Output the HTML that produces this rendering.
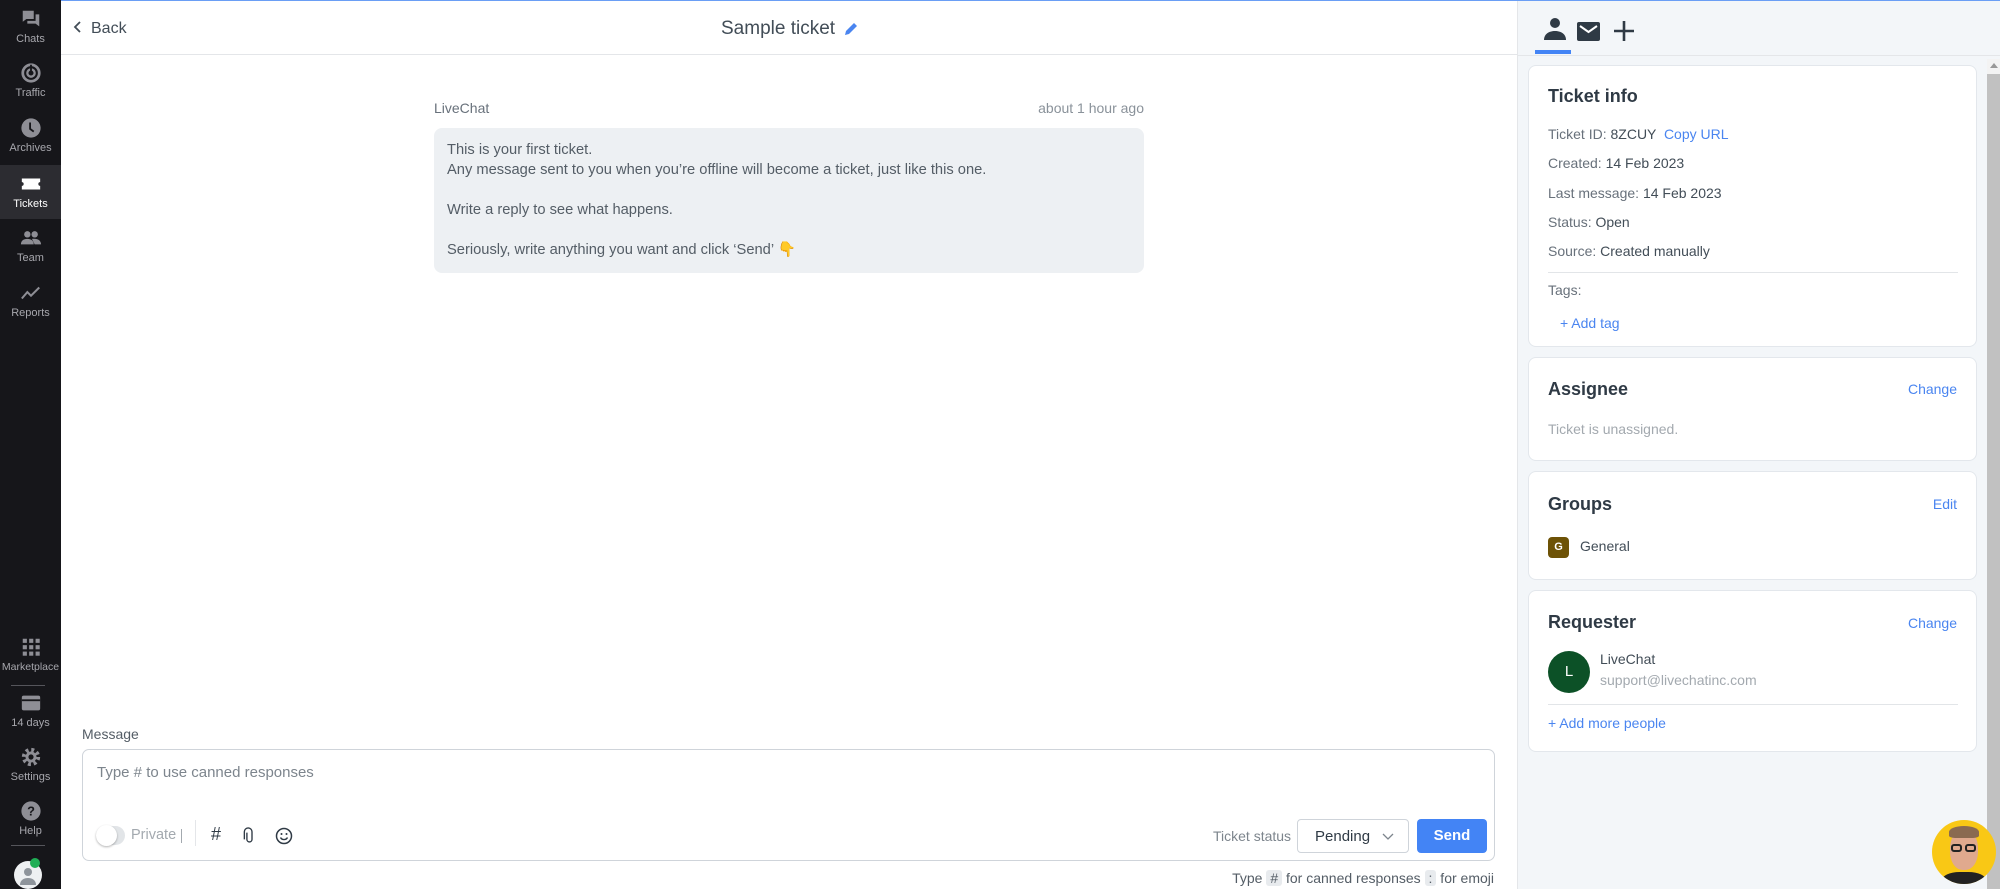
<!DOCTYPE html>
<html><head><meta charset="utf-8">
<style>
*{box-sizing:border-box;margin:0;padding:0}
body{width:2000px;height:889px;overflow:hidden;font-family:"Liberation Sans",sans-serif;background:#fff;position:relative;color:#424d57}
.abs{position:absolute}
#side{left:0;top:0;width:61px;height:889px;background:#16161a}
.si{position:absolute;left:0;width:61px;text-align:center;color:#a7a7ad;font-size:11px}
.si svg{display:block;margin:0 auto 3px}
#topline{left:61px;top:0;width:1939px;height:1px;background:#6a9ef5}
#hdr{left:61px;top:1px;width:1456px;height:54px;border-bottom:1px solid #e4e6e9}
#right{left:1517px;top:1px;width:483px;height:888px;background:#f3f6f9;border-left:1px solid #e4e6e9}
.card{position:absolute;left:10px;width:449px;background:#fff;border:1px solid #e3e7ec;border-radius:8px}
.ct{position:absolute;left:19px;font-size:18px;font-weight:bold;color:#2f3a45}
.row{position:absolute;left:19px;font-size:14px;color:#68717b}
.row b{font-weight:normal;color:#424d57}
.lnk{color:#4a85f0}
.rl{position:absolute;right:19px;font-size:14px;color:#4a85f0}
.txt{font-size:14.7px;line-height:20px}
</style></head><body>
<div id="side" class="abs">
 <div class="si" style="top:8px"><svg width="22" height="22" viewBox="0 0 24 24"><path fill="#8e8e95" d="M3 3h12v9H7l-4 3zM17 7h4v13l-4-3H8v-3h9z"/></svg>Chats</div>
 <div class="si" style="top:62px"><svg width="22" height="22" viewBox="0 0 24 24"><circle cx="12" cy="12" r="9" fill="none" stroke="#8e8e95" stroke-width="3"/><circle cx="12" cy="12" r="4" fill="none" stroke="#8e8e95" stroke-width="2.5"/><path d="M12 3v9" stroke="#16161a" stroke-width="2"/></svg>Traffic</div>
 <div class="si" style="top:117px"><svg width="22" height="22" viewBox="0 0 24 24"><circle cx="12" cy="12" r="10.5" fill="#8e8e95"/><path d="M11 6v7l4 3" stroke="#16161a" stroke-width="2" fill="none"/></svg>Archives</div>
 <div style="position:absolute;left:0;top:165px;width:61px;height:54px;background:#2c2c31"></div>
 <div class="si" style="top:173px;color:#fff"><svg width="22" height="22" viewBox="0 0 24 24"><path fill="#fff" d="M2 6h20v4a2 2 0 0 0 0 4v4H2v-4a2 2 0 0 0 0-4z"/></svg>Tickets</div>
 <div class="si" style="top:227px"><svg width="24" height="22" viewBox="0 0 24 24"><circle cx="8" cy="8" r="3.5" fill="#8e8e95"/><circle cx="16" cy="8" r="3.5" fill="#8e8e95"/><path fill="#8e8e95" d="M1 19c0-4 3-6 7-6s7 2 7 6zM13 13c5-1 10 1 10 6h-7z"/></svg>Team</div>
 <div class="si" style="top:282px"><svg width="22" height="22" viewBox="0 0 24 24"><path d="M2 18l6-7 4 4 9-9" stroke="#8e8e95" stroke-width="2.2" fill="none"/></svg>Reports</div>
 <div class="si" style="top:636px;font-size:10.5px"><svg width="22" height="22" viewBox="0 0 24 24" fill="#8e8e95"><rect x="3" y="3" width="4.5" height="4.5"/><rect x="10" y="3" width="4.5" height="4.5"/><rect x="17" y="3" width="4.5" height="4.5"/><rect x="3" y="10" width="4.5" height="4.5"/><rect x="10" y="10" width="4.5" height="4.5"/><rect x="17" y="10" width="4.5" height="4.5"/><rect x="3" y="17" width="4.5" height="4.5"/><rect x="10" y="17" width="4.5" height="4.5"/><rect x="17" y="17" width="4.5" height="4.5"/></svg>Marketplace</div>
 <div class="abs" style="left:11px;top:685px;width:34px;height:1px;background:#55555b"></div>
 <div class="si" style="top:692px"><svg width="22" height="22" viewBox="0 0 24 24"><rect x="2" y="4" width="20" height="16" rx="2" fill="#8e8e95"/><rect x="2" y="8" width="20" height="2" fill="#16161a"/></svg>14 days</div>
 <div class="si" style="top:746px"><svg width="22" height="22" viewBox="0 0 24 24"><circle cx="12" cy="12" r="7.5" fill="none" stroke="#8e8e95" stroke-width="5" stroke-dasharray="3 2.9"/><circle cx="12" cy="12" r="6" fill="#8e8e95"/><circle cx="12" cy="12" r="2.8" fill="#16161a"/></svg>Settings</div>
 <div class="si" style="top:800px"><svg width="22" height="22" viewBox="0 0 24 24"><circle cx="12" cy="12" r="10.5" fill="#8e8e95"/><text x="12" y="17" text-anchor="middle" font-size="14" font-weight="bold" fill="#16161a" font-family="Liberation Sans">?</text></svg>Help</div>
 <div class="abs" style="left:11px;top:845px;width:34px;height:1px;background:#55555b"></div>
 <div class="abs" style="left:14px;top:861px;width:28px;height:28px;border-radius:50%;background:#eef0f2;overflow:hidden"><svg width="28" height="28" viewBox="0 0 28 28"><circle cx="14" cy="11" r="4" fill="#8e949b"/><path d="M6 24c0-5 4-7 8-7s8 2 8 7z" fill="#8e949b"/></svg></div>
 <div class="abs" style="left:30px;top:858px;width:10px;height:10px;border-radius:50%;background:#1fae55"></div>
</div>
<div id="topline" class="abs"></div>
<div id="hdr" class="abs">
 <div class="abs" style="left:12px;top:19px;font-size:16px;color:#424d57"><svg width="10" height="12" viewBox="0 0 10 12" style="margin-right:8px"><path d="M7 1L2 6l5 5" stroke="#424d57" stroke-width="1.8" fill="none"/></svg>Back</div>
 <div class="abs" style="left:660px;top:17px;font-size:19px;color:#424d57">Sample ticket</div>
 <svg class="abs" style="left:782px;top:20px" width="16" height="16" viewBox="0 0 16 16"><path d="M2 14l1-4 8-8 3 3-8 8z" fill="#4a85f0"/></svg>
</div>
<div class="abs" style="left:434px;top:100px;font-size:14px;color:#68717b">LiveChat</div>
<div class="abs" style="left:1000px;width:144px;text-align:right;top:100px;font-size:14px;color:#8a929a">about 1 hour ago</div>
<div class="abs txt" style="left:434px;top:128px;width:710px;height:145px;background:#edf0f3;border-radius:8px;padding:12px 13px;color:#545d66">
This is your first ticket.<br>Any message sent to you when you’re offline will become a ticket, just like this one.<br><br>Write a reply to see what happens.<br><br>Seriously, write anything you want and click ‘Send’ 👇
</div>
<div class="abs" style="left:82px;top:726px;font-size:14px;color:#545d66">Message</div>
<div class="abs" style="left:82px;top:749px;width:1413px;height:112px;border:1px solid #cfd4da;border-radius:7px">
 <div class="abs" style="left:14px;top:14px;font-size:15px;color:#7d858d">Type # to use canned responses</div>
 <div class="abs" style="left:13px;top:76px;width:29px;height:19px;border-radius:10px;background:#e2e5e8"></div>
 <div class="abs" style="left:13px;top:75px;width:21px;height:21px;border-radius:50%;background:#fff;box-shadow:0 1px 2px rgba(0,0,0,.3)"></div>
 <div class="abs" style="left:48px;top:77px;font-size:14.5px;color:#a3a9af">Private</div>
 <div class="abs" style="left:98px;top:79px;width:1px;height:14px;background:#a3a9af"></div>
 <div class="abs" style="left:112px;top:70px;width:1px;height:26px;background:#e4e6e9"></div>
 <div class="abs" style="left:128px;top:74px;font-size:18px;color:#2f3a45">#</div>
 <svg class="abs" style="left:159px;top:76px" width="14" height="20" viewBox="0 0 14 20"><path d="M4 6v8a3 3 0 0 0 6 0V5a4.5 4.5 0 0 0-9 0v9" stroke="#2f3a45" stroke-width="1.6" fill="none" transform="translate(1.5 1.5) scale(.85)"/></svg>
 <svg class="abs" style="left:192px;top:77px" width="18" height="18" viewBox="0 0 18 18"><circle cx="9" cy="9" r="7.5" fill="none" stroke="#2f3a45" stroke-width="1.5"/><circle cx="6.5" cy="7" r="1" fill="#2f3a45"/><circle cx="11.5" cy="7" r="1" fill="#2f3a45"/><path d="M5.5 10.5a4 4 0 0 0 7 0" stroke="#2f3a45" stroke-width="1.4" fill="none"/></svg>
 <div class="abs" style="left:1130px;top:78px;font-size:14px;color:#7d858d">Ticket status</div>
 <div class="abs" style="left:1214px;top:69px;width:112px;height:34px;border:1px solid #cfd4da;border-radius:4px;font-size:15px;color:#2f3a45;padding:8px 0 0 17px">Pending <svg width="12" height="8" viewBox="0 0 12 8" style="margin-left:8px"><path d="M1 1l5 5 5-5" stroke="#7d858d" stroke-width="1.3" fill="none"/></svg></div>
 <div class="abs" style="left:1334px;top:69px;width:70px;height:34px;background:#4384f5;border-radius:4px;color:#fff;font-size:15px;font-weight:bold;text-align:center;line-height:34px">Send</div>
</div>
<div class="abs" style="left:1100px;width:394px;text-align:right;top:870px;font-size:14px;color:#545d66">Type <span style="background:#e8ebee;border-radius:3px;padding:0 4px">#</span> for canned responses <span style="background:#e8ebee;border-radius:3px;padding:0 4px">:</span> for emoji</div>

<div id="right" class="abs">
 <svg class="abs" style="left:24px;top:16px" width="26" height="24" viewBox="0 0 26 24"><circle cx="13" cy="6" r="5" fill="#2f3a45"/><path d="M2 23c0-6 5-9 11-9s11 3 11 9z" fill="#2f3a45"/></svg>
 <div class="abs" style="left:17px;top:49px;width:36px;height:4px;background:#4384f5"></div>
 <svg class="abs" style="left:59px;top:21px" width="23" height="19" viewBox="0 0 23 19"><rect width="23" height="19" rx="2" fill="#2f3a45"/><path d="M3 4l8.5 6L20 4" stroke="#fff" stroke-width="2" fill="none"/></svg>
 <svg class="abs" style="left:95px;top:19px" width="22" height="22" viewBox="0 0 22 22"><path d="M11 1v20M1 11h20" stroke="#2f3a45" stroke-width="2.6"/></svg>
 <div class="abs" style="left:0;top:54px;width:483px;height:1px;background:#e4e6e9"></div>
 <div class="abs" style="left:469px;top:73px;width:14px;height:815px;background:#c1c1c1"></div>
 <div class="abs" style="left:469px;top:58px;width:14px;height:15px;background:#f3f3f3"></div>
 <div class="abs" style="left:472px;top:62px;width:0;height:0;border:4px solid transparent;border-bottom:5px solid #999;border-top:0"></div>

 <div class="card" style="top:64px;height:282px">
  <div class="ct" style="top:20px">Ticket info</div>
  <div class="row" style="top:60px">Ticket ID: <b>8ZCUY</b> &nbsp;<span class="lnk">Copy URL</span></div>
  <div class="row" style="top:89px">Created: <b>14 Feb 2023</b></div>
  <div class="row" style="top:119px">Last message: <b>14 Feb 2023</b></div>
  <div class="row" style="top:148px">Status: <b>Open</b></div>
  <div class="row" style="top:177px">Source: <b>Created manually</b></div>
  <div class="abs" style="left:19px;top:206px;width:410px;height:1px;background:#e2e5e8"></div>
  <div class="row" style="top:216px">Tags:</div>
  <div class="row lnk" style="top:249px;left:31px;color:#4a85f0">+ Add tag</div>
 </div>
 <div class="card" style="top:356px;height:104px">
  <div class="ct" style="top:21px">Assignee</div><div class="rl" style="top:23px">Change</div>
  <div class="row" style="top:63px;color:#a3a9af">Ticket is unassigned.</div>
 </div>
 <div class="card" style="top:470px;height:109px">
  <div class="ct" style="top:22px">Groups</div><div class="rl" style="top:24px">Edit</div>
  <div class="abs" style="left:19px;top:65px;width:21px;height:21px;border-radius:4px;background:#6d5206;color:#fff;font-size:11px;font-weight:bold;text-align:center;line-height:21px">G</div>
  <div class="row" style="top:66px;left:51px;color:#424d57">General</div>
 </div>
 <div class="card" style="top:589px;height:162px">
  <div class="ct" style="top:21px">Requester</div><div class="rl" style="top:24px">Change</div>
  <div class="abs" style="left:19px;top:60px;width:42px;height:42px;border-radius:50%;background:#0c5127;color:#fff;font-size:15px;text-align:center;line-height:42px">L</div>
  <div class="row" style="top:60px;left:71px;color:#424d57">LiveChat</div>
  <div class="row" style="top:81px;left:71px;color:#a3a9af">support@livechatinc.com</div>
  <div class="abs" style="left:19px;top:113px;width:410px;height:1px;background:#e2e5e8"></div>
  <div class="row" style="top:124px;color:#4a85f0">+ Add more people</div>
 </div>
</div>
<div class="abs" style="left:1932px;top:820px;width:64px;height:64px;border-radius:50%;background:#f9c815;overflow:hidden">
 <div class="abs" style="left:18px;top:10px;width:28px;height:40px;border-radius:45%;background:#e0a98e"></div>
 <div class="abs" style="left:17px;top:6px;width:30px;height:12px;border-radius:50% 50% 20% 20%;background:#8a6a50"></div>
 <div class="abs" style="left:19px;top:24px;width:11px;height:8px;border:2px solid #222;border-radius:3px"></div>
 <div class="abs" style="left:33px;top:24px;width:11px;height:8px;border:2px solid #222;border-radius:3px"></div>
 <div class="abs" style="left:10px;top:52px;width:44px;height:20px;border-radius:40% 40% 0 0;background:#222"></div>
</div>
</body></html>
